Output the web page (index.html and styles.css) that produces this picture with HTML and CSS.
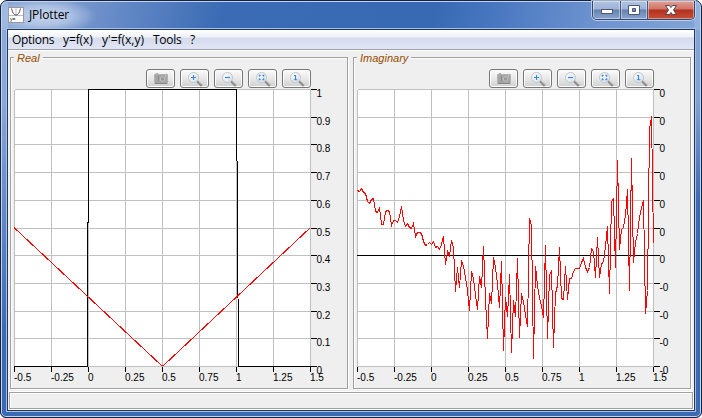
FILE: index.html
```html
<!DOCTYPE html>
<html lang="en">
<head>
  <meta charset="UTF-8" />
  <title>JPlotter</title>
  <link rel="stylesheet" href="styles.css">
</head>
<body>
  <svg class="defs" width="0" height="0">
    <defs>
      <linearGradient id="lens" x1="0" y1="0" x2="1" y2="1">
        <stop offset="0" stop-color="#ffffff"/>
        <stop offset="1" stop-color="#d3deea"/>
      </linearGradient>
      <symbol id="magnifier" viewBox="0 0 17 17">
        <path d="M9.5 9.5 L14.8 14.8" stroke="#858585" stroke-width="2.4"/>
        <path d="M10 9.3 L15 14.3" stroke="#c4c4c4" stroke-width=".8"/>
        <circle cx="6.5" cy="6.5" r="5" fill="url(#lens)" stroke="#c2c5c8"/>
      </symbol>
    </defs>
  </svg>

  <div class="window">
    <header class="titlebar">
      <svg class="app-icon" width="16" height="16" viewBox="0 0 16 16">
        <rect x=".5" y=".5" width="15" height="15" fill="#fff" stroke="#999"/>
        <path d="M1 8.5 H15 M8 1 V9" stroke="#bbb" fill="none"/>
        <path d="M3.5 1.5 Q5 8 8 8 Q11 8 12.5 1.5" stroke="#555" fill="none"/>
        <text x="2" y="14" class="icon-text">y=</text>
      </svg>
      <span class="title">JPlotter</span>
      <div class="controls">
        <div class="control min">
          <svg width="14" height="14"><rect x="1.5" y="6.5" width="11" height="4" fill="#fff" stroke="#4d5874"/></svg>
        </div>
        <div class="control max">
          <svg width="14" height="14"><path d="M1.5 2.5 H12.5 V11.5 H1.5 Z M5.5 5.5 V8.5 H8.5 V5.5 Z" fill="#fff" stroke="#4d5874" fill-rule="evenodd"/></svg>
        </div>
        <div class="control close">
          <svg width="14" height="14"><path d="M1.5 2.5 H5.5 L7 4.5 L8.5 2.5 H12.5 L9.5 7 L12.5 11.5 H8.5 L7 9.5 L5.5 11.5 H1.5 L4.5 7 Z" fill="#fff" stroke="#5b4450"/></svg>
        </div>
      </div>
    </header>

    <main class="client">
      <nav class="menubar">
        <span class="m-options">Options</span>
        <span class="m-fx">y=f(x)</span>
        <span class="m-fxy">y'=f(x,y)</span>
        <span class="m-tools">Tools</span>
        <span>?</span>
      </nav>

      <div class="panels">
        <section class="panel">
          <h2 class="legend">Real</h2>
          <div class="toolbar"></div>
          <svg class="plot" id="real" width="330" height="296"></svg>
        </section>
        <section class="panel">
          <h2 class="legend">Imaginary</h2>
          <div class="toolbar"></div>
          <svg class="plot" id="imaginary" width="330" height="296"></svg>
        </section>
      </div>

      <footer class="statusbar"></footer>
    </main>
  </div>

  <script src="script.js"></script>
</body>
</html>
```
FILE: styles.css
```css
* {
  margin: 0;
  padding: 0;
  box-sizing: border-box;
}

body {
  background: #fff;
  overflow: hidden;
}

.defs {
  position: absolute;
}

.window {
  width: 702px;
  height: 418px;
  border: 1px solid #16223f;
  border-radius: 7px 7px 6px 6px;
  box-shadow: inset 0 0 0 1px #c3d5ee;
  padding: 0 6px;
  background:
    linear-gradient(to bottom, rgba(160, 188, 228, 0.8), rgba(160, 188, 228, 0.75) 100px, rgba(62, 108, 184, 0) 330px) left / 7px 100% no-repeat,
    linear-gradient(to bottom, rgba(150, 180, 224, 0.8), rgba(150, 180, 224, 0.75) 100px, rgba(62, 108, 184, 0) 200px) right / 7px 100% no-repeat,
    radial-gradient(ellipse 52px 18px at 44px 15px, rgba(205, 219, 240, 0.9), rgba(205, 219, 240, 0.6) 50%, rgba(205, 219, 240, 0)) no-repeat,
    linear-gradient(100deg, #8ba7d6 0, #7c9bd0 60px, #3a6bb4 220px, #386ab4 430px, #4575bf 480px, #6e93cf 590px, #84a6d8 702px) top / 100% 29px no-repeat,
    #3b6ab5;
}

.titlebar {
  height: 28px;
  display: flex;
  align-items: flex-start;
}

.app-icon {
  margin: 6px 5px 0 1px;
}

.icon-text {
  font: 5px "Liberation Sans", sans-serif;
}

.title {
  flex: 1;
  margin-top: 6px;
  font: 12px/16px "Open Sans", sans-serif;
  letter-spacing: -0.1px;
  color: #000;
}

.controls {
  display: flex;
  width: 103px;
  height: 19px;
  border: 1px solid #36486f;
  border-top: 0;
  border-radius: 0 0 5px 5px;
  overflow: hidden;
  box-shadow: 0 0 0 1px rgba(205, 221, 243, 0.75);
}

.control {
  display: flex;
  align-items: center;
  justify-content: center;
  width: 28px;
  border-right: 1px solid #46587e;
  box-shadow: inset 0 0 0 1px rgba(255, 255, 255, 0.4);
  background: linear-gradient(#b1c3e0 0, #9eb3d7 8px, #6681ae 9px, #89a5cf 18px);
}

.control.max {
  width: 27px;
}

.control.close {
  width: 46px;
  border-right: 0;
  background: linear-gradient(#dda198 0, #d07466 8px, #b1321f 9px, #c94e35 18px);
}

.client {
  height: 382px;
  border: 1px solid #26375c;
  box-shadow: 0 0 0 1px #a5c0e4;
  background: #efefef;
}

.menubar {
  display: flex;
  height: 20px;
  padding-left: 4px;
  border-bottom: 1px solid #a0a0a8;
  box-shadow: 0 1px #fff;
  background: linear-gradient(#fff 0, #eef1f8 7px, #d4dbed 8px, #e1e6f6 19px);
  font: 12px/20px "Open Sans", sans-serif;
  letter-spacing: -0.3px;
  color: #000;
}

.m-options {
  width: 51px;
}

.m-fx {
  width: 39px;
  letter-spacing: -0.1px;
}

.m-fxy {
  width: 51px;
  letter-spacing: 0;
}

.m-tools {
  width: 37px;
}

.panels {
  display: flex;
  gap: 5px;
  padding: 7px 0 0 2px;
}

.panel {
  width: 338px;
  height: 332px;
  border: 1px solid #a0a0a0;
  box-shadow: 1px 1px #fff, inset 1px 1px #fff;
}

.legend {
  width: max-content;
  height: 13px;
  margin: -7px 0 5px 3px;
  padding: 0 3px;
  background: #efefef;
  font: italic 11px/15px "Liberation Sans", Arial, sans-serif;
  color: #994c00;
}

.toolbar {
  display: flex;
  justify-content: flex-end;
  gap: 5px;
  height: 20px;
  padding-right: 36px;
}

.tool {
  width: 29px;
  height: 19px;
  padding: 1px 0 0 6px;
  border: 1px solid #777;
  border-radius: 3px;
  box-shadow: inset 0 0 0 1px #fff;
  background: linear-gradient(#fafafa, #e8e8e8 50%, #cfcfcf);
}

.tool svg {
  display: block;
}

.plot {
  display: block;
  margin-left: 3px;
  font: 10px "Liberation Sans", Arial, sans-serif;
}

.plot path,
.plot polyline,
.plot rect {
  shape-rendering: crispEdges;
}

.grid {
  stroke: #c0c0c0;
  fill: none;
}

.black {
  stroke: #000;
  fill: none;
}

.red {
  stroke: #f00;
  fill: none;
}

.statusbar {
  width: 684px;
  height: 17px;
  margin: 3px 0 0 1px;
  border: 1px solid #a0a0a0;
  box-shadow: 0 -1px #fff, 1px 1px #fff, inset 1px 1px #fff;
}
```
FILE: script.js
```js
const WIDTH = 296;
const HEIGHT = 277;
const xLabels = ["-0.5", "-0.25", "0", "0.25", "0.5", "0.75", "1", "1.25", "1.5"];

const glyphs = [
  '',
  '<path d="M4 6.5 H9 M6.5 4 V9" stroke="#3c86d6" stroke-width="1.1"/>',
  '<path d="M4 6.5 H9" stroke="#3c86d6" stroke-width="1.1"/>',
  '<path d="M4.3 5.8 V4.3 H5.8 M7.2 4.3 H8.7 V5.8 M8.7 7.2 V8.7 H7.2 M5.8 8.7 H4.3 V7.2" stroke="#3c86d6" stroke-width="1.1" fill="none"/>',
  '<path d="M5 4.5 H6.5 V8.8 M4.8 8.8 H8.4" stroke="#3c86d6" stroke-width="1.1" fill="none"/>'
];

// disabled snapshot button
const camera = `<svg width="17" height="15">
  <path d="M1.5 3.5 H3 V2.5 H5 V3.5 H14.5 V12.5 H1.5 Z" fill="#a4a4a4" stroke="#b3b3b3"/>
  <path d="M2 12.5 H14" stroke="#888"/>
  <path d="M5.5 5 V10" stroke="#8a8a8a"/>
  <circle cx="9.5" cy="8" r="2.3" fill="#999" stroke="#c4c4c4"/>
  <path d="M12.5 4 V6" stroke="#c4c4c4"/>
</svg>`;

document.querySelectorAll(".toolbar").forEach(bar => {
  bar.innerHTML = glyphs.map((g, i) => `<div class="tool">${
    i === 0 ? camera : `<svg width="17" height="17"><use href="#magnifier" width="17" height="17"/>${g}</svg>`
  }</div>`).join("");
});

// samples of the imaginary part, two pixels apart
const samples = [
  101, 102, 99, 103, 104, 112, 114, 110, 109, 122, 123, 118, 135, 135, 122, 121, 122, 136, 131, 131,
  133, 127, 117, 131, 137, 134, 138, 139, 134, 147, 143, 143, 144, 152, 156, 155, 153, 155, 152, 158,
  157, 160, 155, 147, 175, 162, 166, 151, 158, 202, 178, 198, 171, 177, 188, 201, 221, 182, 189, 206,
  220, 187, 198, 157, 211, 249, 204, 214, 168, 178, 194, 218, 172, 261, 208, 227, 185, 263, 211, 227,
  169, 248, 204, 212, 226, 237, 129, 136, 269, 177, 196, 208, 216, 228, 156, 249, 186, 181, 258, 204,
  196, 158, 209, 210, 177, 210, 189, 189, 182, 179, 179, 179, 173, 169, 178, 182, 178, 159, 162, 188,
  148, 188, 174, 173, 156, 137, 204, 112, 109, 178, 71, 160, 140, 138, 126, 100, 201, 69, 173, 153,
  144, 128, 118, 111, 224, 201, 40, 27, 154
];

function drawPlot(id, yLabels, curves) {
  let grid = "";
  let ticks = "";
  let text = "";

  xLabels.forEach((label, i) => {
    const x = i * 37;
    grid += `M${x} 0V${HEIGHT}`;
    ticks += `M${x} ${HEIGHT + 0.5}v5`;
    text += `<text x="${x - 0.5}" y="291.5">${label}</text>`;
  });

  yLabels.forEach((label, i) => {
    const y = Math.floor(i * HEIGHT / 10 + 0.5);
    grid += `M0 ${y}H${WIDTH}`;
    ticks += `M${WIDTH + 0.5} ${y}h6`;
    text += `<text x="${WIDTH + 6}" y="${y + 7.5}">${label}</text>`;
  });

  document.getElementById(id).innerHTML = `
    <rect width="${WIDTH}" height="${HEIGHT}" fill="#fff"/>
    <g transform="translate(.5 .5)">
      <path class="grid" d="${grid}"/>
      <path class="black" d="${ticks}"/>
      ${curves}
      ${text}
    </g>`;
}

drawPlot("real", ["1", "0.9", "0.8", "0.7", "0.6", "0.5", "0.4", "0.3", "0.2", "0.1", "0"], `
  <polyline class="black" points="-.5,277 73,277 74,0 222,0 224,277 296,277"/>
  <polyline class="red" points="-.5,138 147,276 149,276 296,138"/>`);

drawPlot("imaginary", ["0", "0", "0", "0", "0", "0", "0", "-0", "-0", "-0", "-0"], `
  <path class="black" d="M-.5 166H296"/>
  <polyline class="red" points="${samples.map((y, i) => i * 2 + "," + y).join(" ")}"/>`);
```
